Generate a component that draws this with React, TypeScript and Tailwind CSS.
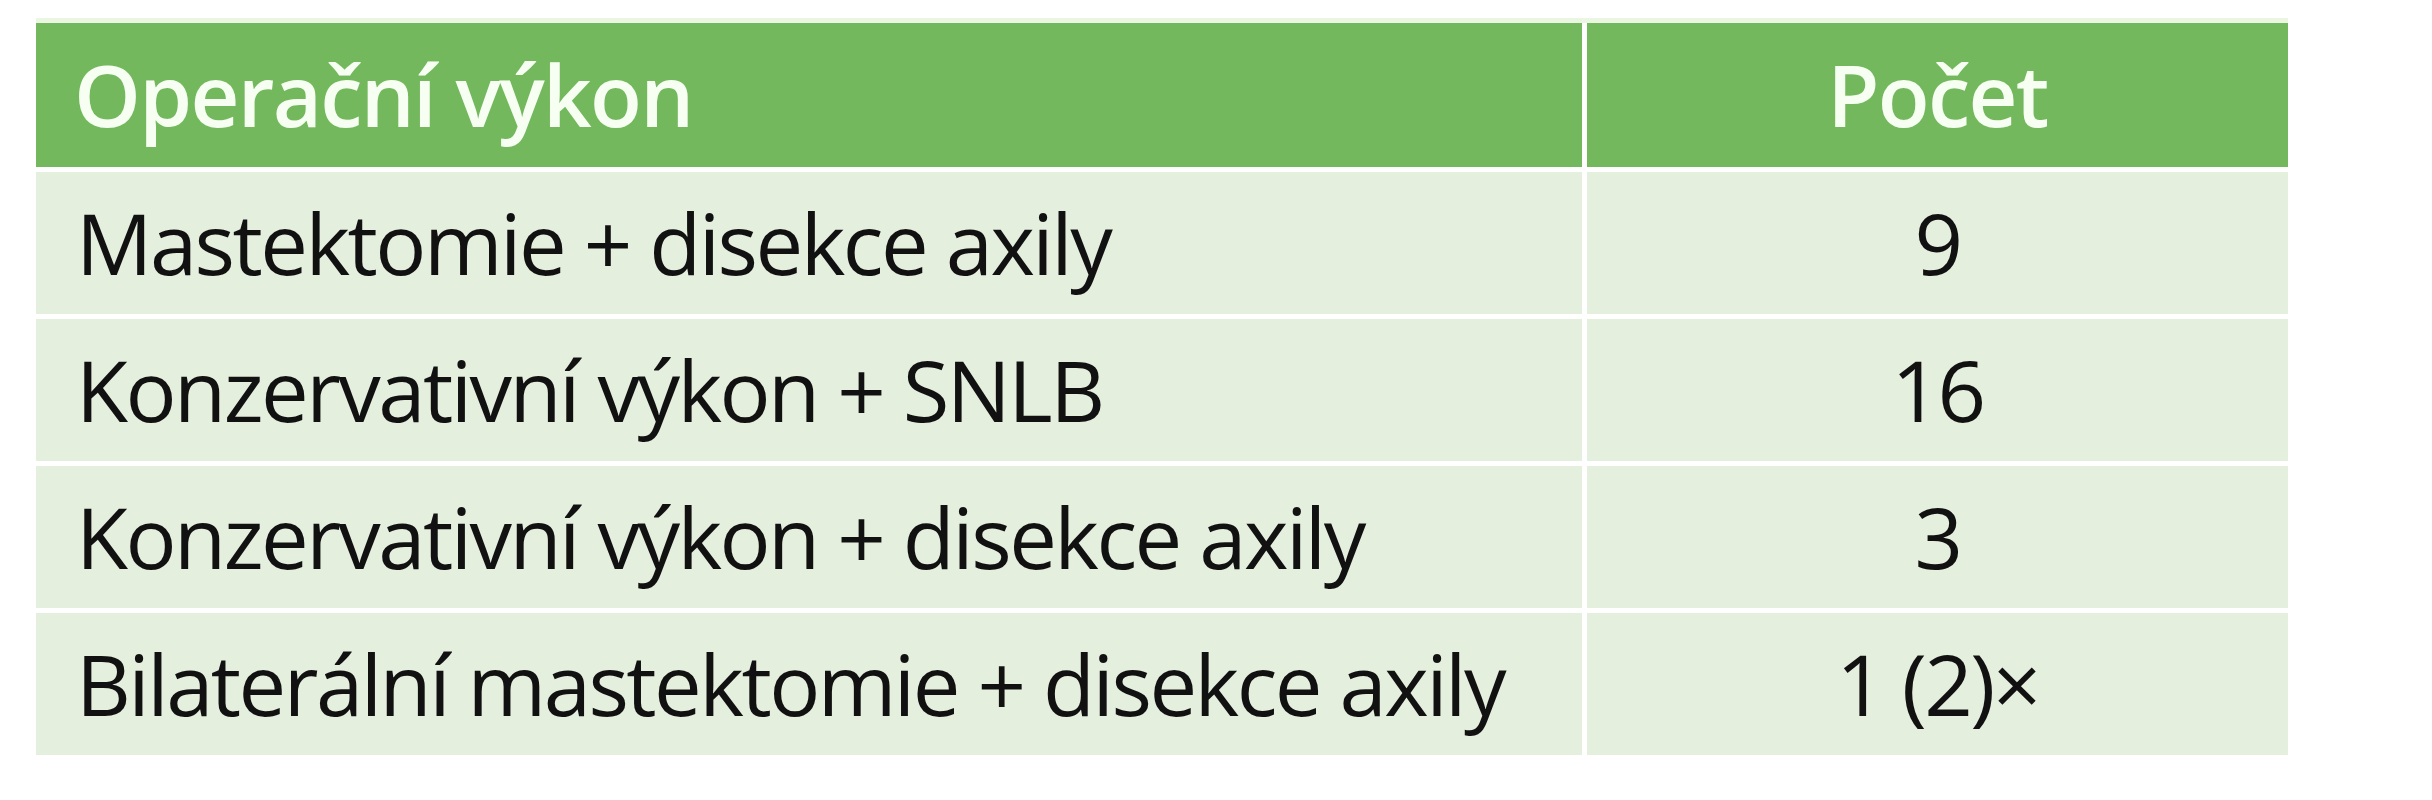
const rows = [
  { label: 'Mastektomie + disekce axily', count: '9' },
  { label: 'Konzervativní výkon + SNLB', count: '16' },
  { label: 'Konzervativní výkon + disekce axily', count: '3' },
  { label: 'Bilaterální mastektomie + disekce axily', count: '1 (2)×' },
];

export default function App() {
  return (
    <div className="w-[2432px] h-[800px] bg-white pt-[18px] pl-[36px] font-['Open_Sans',sans-serif]">
      <div className="w-[2252px]">
        <div className="h-[5px] bg-[#eaf6e2]" />
        <div className="grid grid-cols-[1546px_701px] gap-[5px]">
          <div className="h-[144px] bg-[#73b85c] flex items-center pl-[38px] text-[85px] tracking-[-0.02em] font-semibold text-[#f6fff2] whitespace-nowrap">
            Operační výkon
          </div>
          <div className="h-[144px] bg-[#73b85c] flex items-center justify-center text-[85px] tracking-[-0.02em] font-semibold text-[#f6fff2]">
            Počet
          </div>
          {rows.map((r) => (
            <div key={r.label} className="contents">
              <div className="h-[142px] bg-[#e5efde] flex items-center pl-[40px] text-[85px] tracking-[-0.03em] text-[#111] whitespace-nowrap">
                {r.label}
              </div>
              <div className="h-[142px] bg-[#e5efde] flex items-center justify-center text-[85px] tracking-[-0.03em] text-[#111] whitespace-nowrap">
                {r.count}
              </div>
            </div>
          ))}
        </div>
      </div>
    </div>
  );
}
